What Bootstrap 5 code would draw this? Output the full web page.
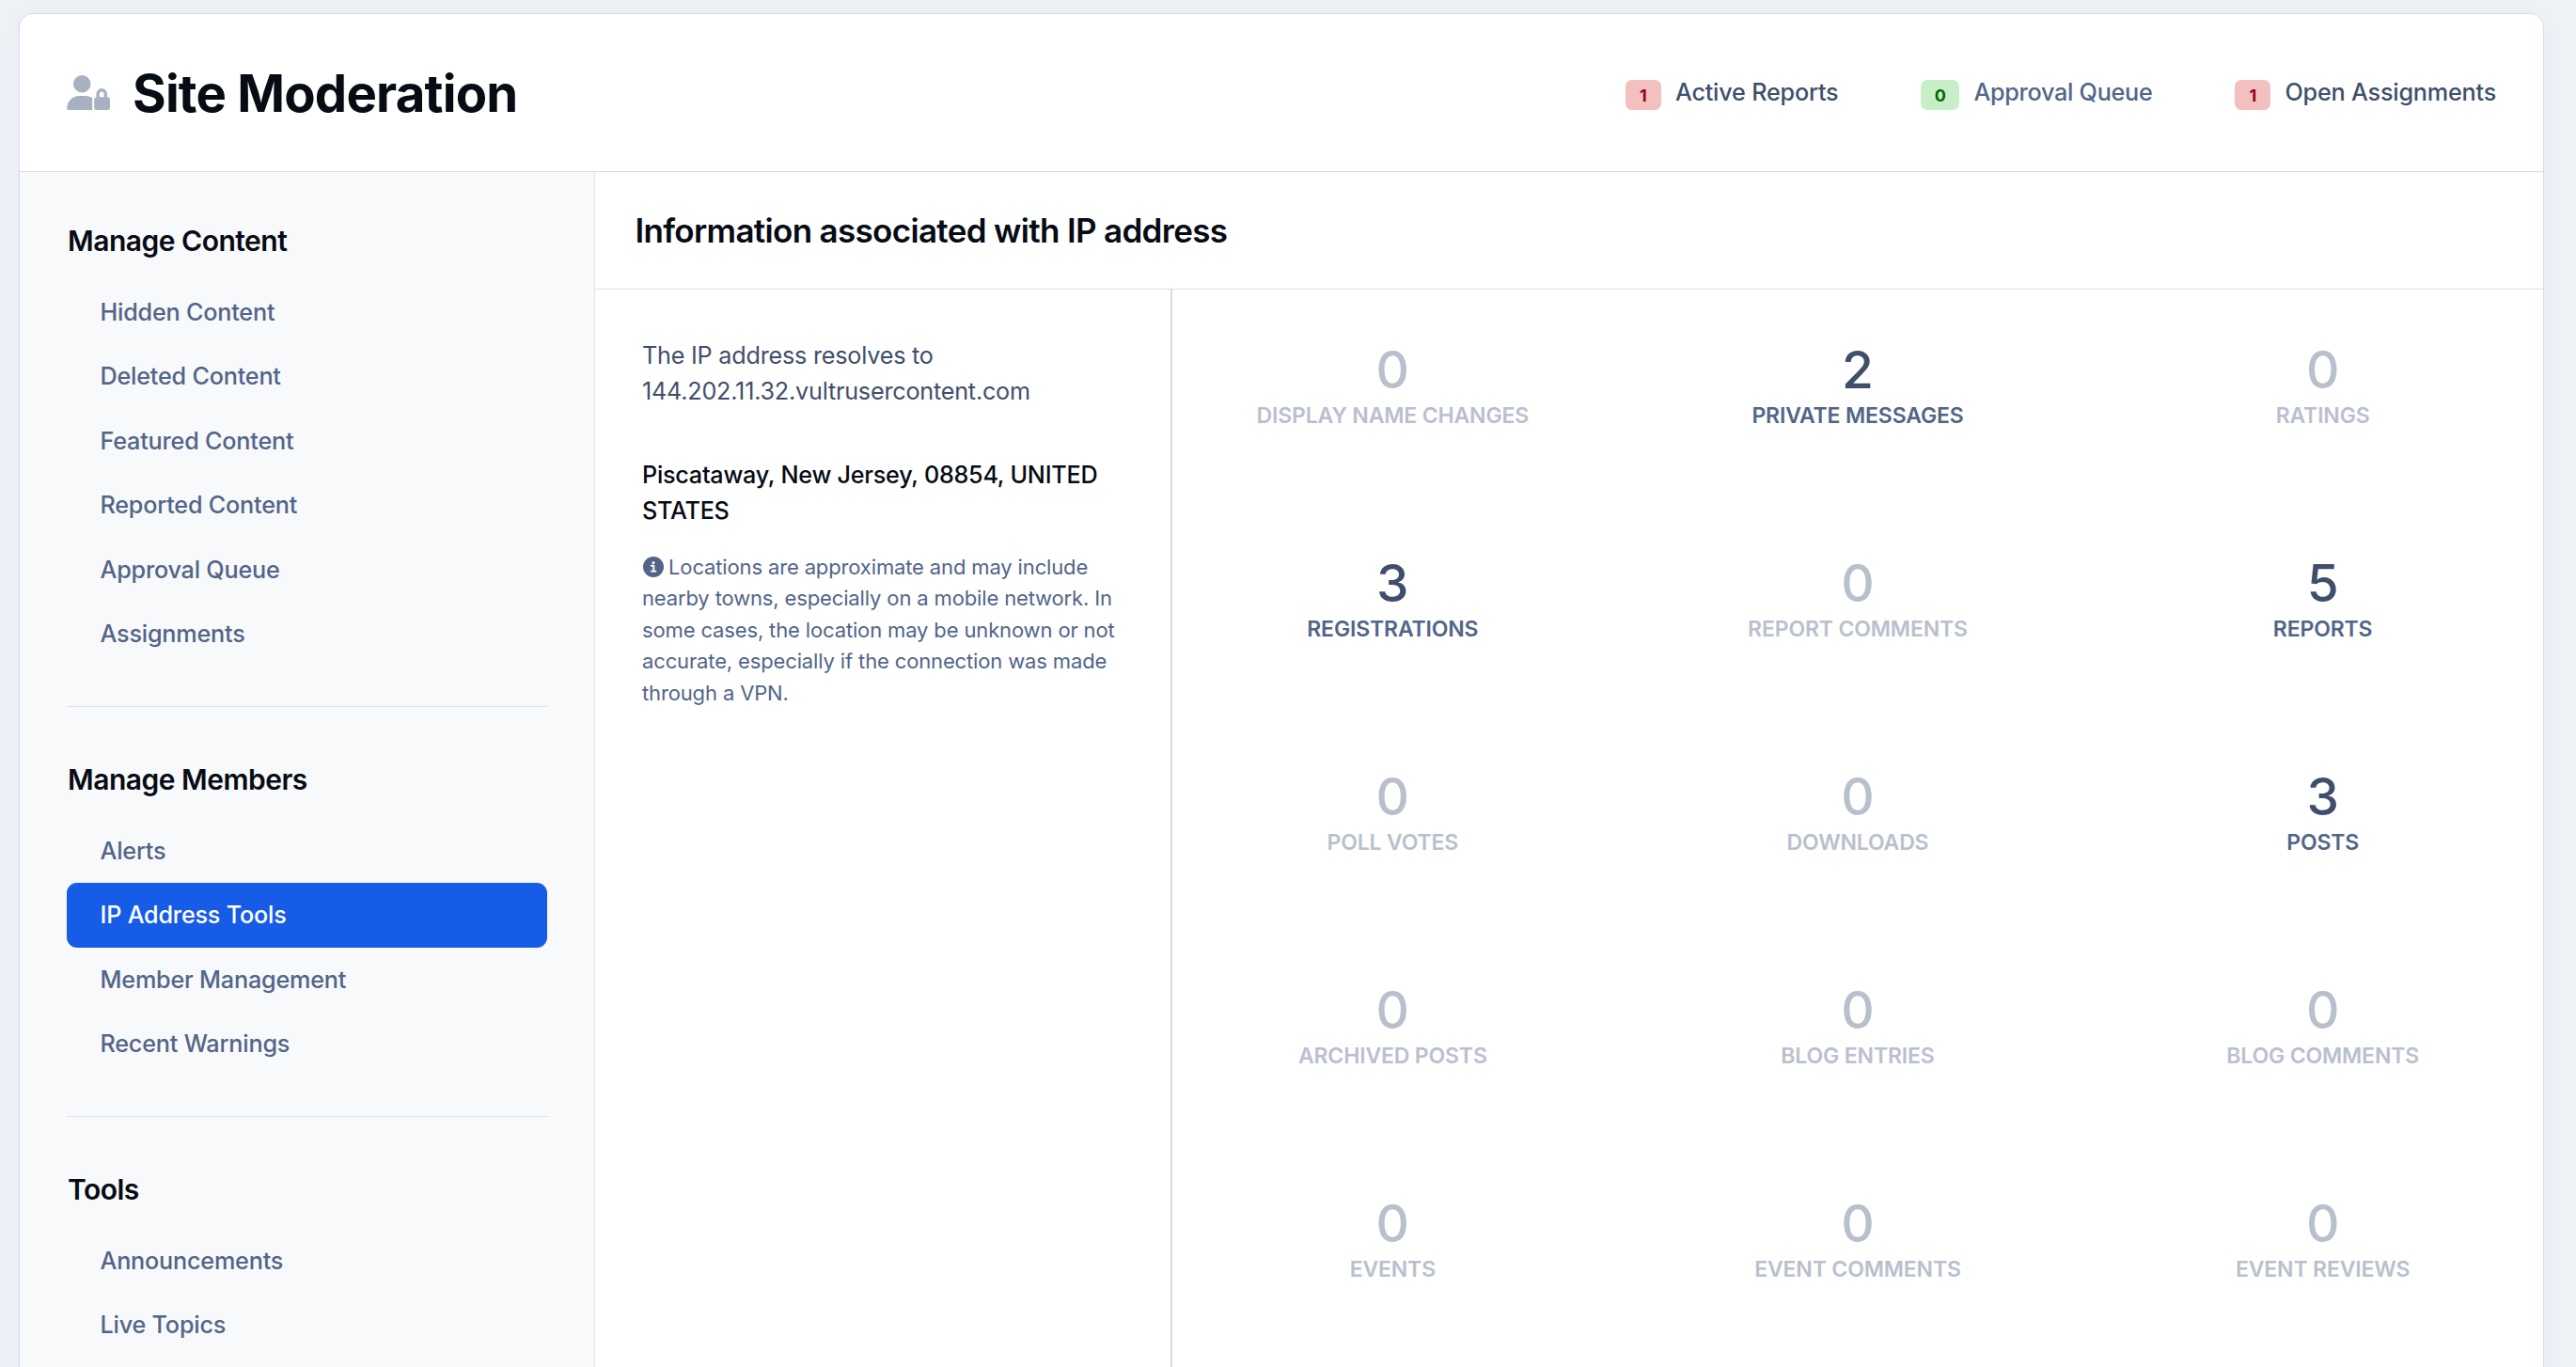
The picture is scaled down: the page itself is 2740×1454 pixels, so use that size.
<!DOCTYPE html>
<html lang="en">
<head>
<meta charset="utf-8">
<meta name="viewport" content="width=device-width, initial-scale=1">
<title>Site Moderation</title>
<link href="https://cdn.jsdelivr.net/npm/bootstrap@5.3.0/dist/css/bootstrap.min.css" rel="stylesheet">
<style>
  body { background: #eef1f6; font-family: Inter, "Liberation Sans", sans-serif; font-size: 25.2px; color: #3f4f6b; height: 1454px; overflow: hidden; }
  .panel { margin: 14px 34px 0 20px; height: 1480px; border: 1px solid #d6dde8; border-radius: 15px; background: #fff; box-shadow: 0 4px 24px rgba(40, 60, 100, .03); }
  .panel-top { height: 168px; padding: 0 50px; border-bottom: 1px solid #d6dde8; }
  .panel-top h1 { font-size: 54.5px; font-weight: 700; letter-spacing: -.8px; line-height: 64px; color: #060b14; }
  .panel-icon { width: 46px; height: 37px; margin: 0 24px 1px 0; color: #a8b1c1; }
  .counters { gap: 88px; padding-bottom: 2px; }
  .counter { gap: 15px; color: #3f4f6b; font-weight: 500; letter-spacing: -.2px; line-height: 38px; text-decoration: none; white-space: nowrap; }
  .counter.quiet { color: #526588; letter-spacing: -.28px; }
  .count-pill { height: 32px; min-width: 38px; margin-top: 6px; padding: 0 14px; border-radius: 7px; font-size: 18px; font-weight: 700; line-height: 33px; letter-spacing: 0; text-align: center; }
  .pill-alert { background: #f3bfbf; color: #990021; }
  .pill-ok { background: #c8eec8; color: #0a6207; min-width: 41px; }
  .side { width: 612px; padding: 54.5px 50px 0 50px; background: #f8f9fb; border-right: 1px solid #dfe4ec; }
  .side h2 { font-size: 30px; font-weight: 600; letter-spacing: -.5px; line-height: 36px; margin: 0 0 24px 1px; color: #060b14; }
  .side .nav-link { height: 68.5px; padding: 0 35.5px; line-height: 68.5px; color: #526588; font-weight: 500; letter-spacing: -.2px; }
  .side .nav-pills .nav-link.active { background: #175ce6; color: #fff; border-radius: 11px; }
  .side section + section { border-top: 1px solid #d9e0ea; padding-top: 58.5px; margin-top: 42.5px; }
  .main-title { height: 125px; padding-left: 42.5px; border-bottom: 1px solid #d9dee8; }
  .main-title h2 { font-size: 35px; font-weight: 600; letter-spacing: -.67px; line-height: 42px; color: #060b14; }
  .ip-info { width: 614px; padding: 51px 50px 0 50px; border-right: 2px solid #d6dde8; line-height: 38px; }
  .ip-info .resolved { margin-bottom: 51px; letter-spacing: -.22px; }
  .ip-info .place { margin-bottom: 25px; color: #060b14; font-weight: 500; letter-spacing: -.25px; }
  .ip-info .hint { font-size: 22px; line-height: 33.4px; color: #526588; letter-spacing: -.14px; white-space: nowrap; }
  .hint svg { width: 22px; height: 22px; margin: -5px -1px 0 1px; }
  .stats { padding-top: 54px; overflow: hidden; }
  .stats .row { --bs-gutter-x: 26px; }
  .stat { height: 227px; }
  .stat-num { font-size: 55px; font-weight: 450; line-height: 63px; color: #3f4f6b; }
  .stat-name { font-size: 23px; font-weight: 600; line-height: 34px; letter-spacing: -.15px; color: #526588; text-transform: uppercase; }
  .empty .stat-num, .empty .stat-name { color: #b9c0cd; }
</style>
<script src="https://cdn.jsdelivr.net/npm/bootstrap@5.3.0/dist/js/bootstrap.bundle.min.js"></script>
</head>
<body>
<div class="panel d-flex flex-column overflow-hidden">
  <header class="panel-top d-flex align-items-center flex-shrink-0">
    <svg class="panel-icon" viewBox="0 0 46 37" fill="currentColor" aria-hidden="true">
      <circle cx="16.2" cy="9.2" r="9.2"/>
      <path d="M2 37C.7 37 0 36.200 .1 35 .8 27.500 6 22 13 22h6.500c3 0 5.600 .8 7.900 2.400-.1 .5-.2 1-.2 1.500v9.300c0 .7.100 1.300.300 1.800z"/>
      <path fill-rule="evenodd" d="M31.400 23.200v-3.400a5.800 5.800 0 0 1 11.600 0v3.400h.2a2.800 2.800 0 0 1 2.800 2.800v8.200a2.800 2.800 0 0 1-2.800 2.800H32a2.800 2.800 0 0 1-2.800-2.800V26a2.800 2.800 0 0 1 2.200-2.800zm3.400 0h4.800v-3.400a2.400 2.400 0 0 0-4.800 0z"/>
    </svg>
    <h1 class="mb-0">Site Moderation</h1>
    <div class="counters d-flex ms-auto">
      <a class="counter d-flex" href="#"><span class="count-pill pill-alert">1</span>Active Reports</a>
      <a class="counter quiet d-flex" href="#"><span class="count-pill pill-ok">0</span>Approval Queue</a>
      <a class="counter d-flex" href="#"><span class="count-pill pill-alert">1</span>Open Assignments</a>
    </div>
  </header>
  <div class="d-flex flex-grow-1">
    <aside class="side flex-shrink-0">
      <section>
        <h2>Manage Content</h2>
        <nav class="nav nav-pills flex-column">
          <a class="nav-link" href="#">Hidden Content</a>
          <a class="nav-link" href="#">Deleted Content</a>
          <a class="nav-link" href="#">Featured Content</a>
          <a class="nav-link" href="#">Reported Content</a>
          <a class="nav-link" href="#">Approval Queue</a>
          <a class="nav-link" href="#">Assignments</a>
        </nav>
      </section>
      <section>
        <h2>Manage Members</h2>
        <nav class="nav nav-pills flex-column">
          <a class="nav-link" href="#">Alerts</a>
          <a class="nav-link active" href="#">IP Address Tools</a>
          <a class="nav-link" href="#">Member Management</a>
          <a class="nav-link" href="#">Recent Warnings</a>
        </nav>
      </section>
      <section>
        <h2>Tools</h2>
        <nav class="nav nav-pills flex-column">
          <a class="nav-link" href="#">Announcements</a>
          <a class="nav-link" href="#">Live Topics</a>
        </nav>
      </section>
    </aside>
    <main class="d-flex flex-column flex-grow-1">
      <div class="main-title d-flex align-items-center"><h2 class="mb-0">Information associated with IP address</h2></div>
      <div class="d-flex flex-grow-1">
        <div class="ip-info flex-shrink-0">
          <p class="resolved">The IP address resolves to<br>144.202.11.32.vultrusercontent.com</p>
          <p class="place">Piscataway, New Jersey, 08854, UNITED<br>STATES</p>
          <p class="hint"><svg viewBox="0 0 22 22" aria-hidden="true"><circle cx="11" cy="11" r="11" fill="#526588"/><circle cx="11" cy="6.400" r="1.500" fill="#fff"/><path d="M8.900 9.800h2.400v5.400M8.700 15.600h4.800" fill="none" stroke="#fff" stroke-width="1.900" stroke-linecap="round" stroke-linejoin="round"/></svg> Locations are approximate and may include<br>nearby towns, especially on a mobile network. In<br>some cases, the location may be unknown or not<br>accurate, especially if the connection was made<br>through a VPN.</p>
        </div>
        <div class="stats flex-grow-1">
          <div class="row text-center">
            <div class="col-4 stat empty"><div class="stat-num">0</div><div class="stat-name">Display Name Changes</div></div>
            <div class="col-4 stat"><div class="stat-num">2</div><div class="stat-name">Private Messages</div></div>
            <div class="col-4 stat empty"><div class="stat-num">0</div><div class="stat-name">Ratings</div></div>
            <div class="col-4 stat"><div class="stat-num">3</div><div class="stat-name">Registrations</div></div>
            <div class="col-4 stat empty"><div class="stat-num">0</div><div class="stat-name">Report Comments</div></div>
            <div class="col-4 stat"><div class="stat-num">5</div><div class="stat-name">Reports</div></div>
            <div class="col-4 stat empty"><div class="stat-num">0</div><div class="stat-name">Poll Votes</div></div>
            <div class="col-4 stat empty"><div class="stat-num">0</div><div class="stat-name">Downloads</div></div>
            <div class="col-4 stat"><div class="stat-num">3</div><div class="stat-name">Posts</div></div>
            <div class="col-4 stat empty"><div class="stat-num">0</div><div class="stat-name">Archived Posts</div></div>
            <div class="col-4 stat empty"><div class="stat-num">0</div><div class="stat-name">Blog Entries</div></div>
            <div class="col-4 stat empty"><div class="stat-num">0</div><div class="stat-name">Blog Comments</div></div>
            <div class="col-4 stat empty"><div class="stat-num">0</div><div class="stat-name">Events</div></div>
            <div class="col-4 stat empty"><div class="stat-num">0</div><div class="stat-name">Event Comments</div></div>
            <div class="col-4 stat empty"><div class="stat-num">0</div><div class="stat-name">Event Reviews</div></div>
          </div>
        </div>
      </div>
    </main>
  </div>
</div>
</body>
</html>
